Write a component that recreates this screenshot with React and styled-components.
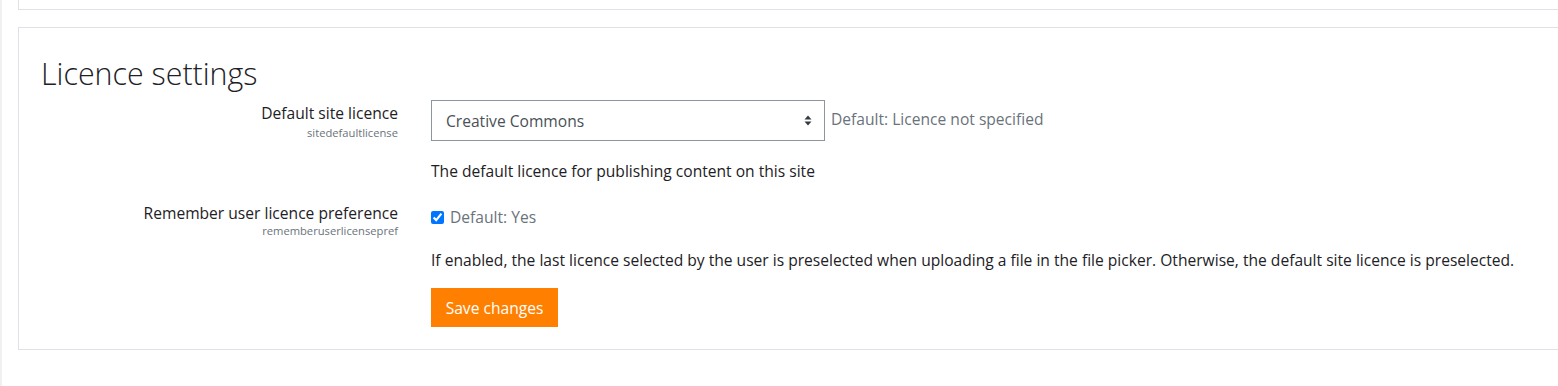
import React from 'react';
import styled, { createGlobalStyle } from 'styled-components';

const GlobalStyle = createGlobalStyle`
  html, body {
    margin: 0;
    padding: 0;
    background: #fff;
    overflow: hidden;
  }
  body {
    font-family: 'Open Sans', 'Noto Sans', sans-serif;
    font-size: 15.6px;
    color: #1d2125;
  }
`;

const Page = styled.div`
  display: flex;
  height: 386px;
  overflow: hidden;
`;

const Edge = styled.div`
  width: 2px;
  flex-shrink: 0;
  background: #f0f0f0;
`;

const Content = styled.div`
  flex: 1;
  padding-left: 16px;
  overflow: hidden;
`;

const TopPanel = styled.div`
  width: 1600px;
  height: 9px;
  border: 1px solid #dee2e6;
  border-top: none;
`;

const Panel = styled.fieldset`
  width: 1600px;
  margin: 17px 0 0;
  padding: 29px 20px 22px;
  border: 1px solid #dee2e6;
  box-sizing: border-box;
`;

const Heading = styled.h2`
  margin: 0 0 9px;
  padding-left: 2px;
  font-size: 30.4px;
  font-weight: 300;
  line-height: 34px;
  color: #1d2125;
`;

const Setting = styled.div`
  display: grid;
  grid-template-columns: 359px 1150px;
  column-gap: 33px;
  margin-top: ${(p) => p.$top || 0}px;
`;

const LabelCell = styled.div`
  display: flex;
  flex-direction: column;
  align-items: flex-end;
  padding-top: 2px;
`;

const Label = styled.label`
  line-height: 22px;
  color: #1d2125;
`;

const Key = styled.span`
  font-size: 11.2px;
  line-height: 14px;
  margin-top: ${(p) => p.$shift || 0}px;
  color: #6a737b;
`;

const ControlCell = styled.div`
  display: flex;
  flex-direction: column;
  align-items: flex-start;
  padding-top: ${(p) => p.$top || 0}px;
`;

const ControlLine = styled.div`
  display: flex;
  align-items: center;
  gap: 6px;
`;

const Select = styled.div`
  width: 394px;
  height: 41px;
  box-sizing: border-box;
  border: 1px solid #8f959e;
  display: flex;
  align-items: center;
  justify-content: space-between;
  padding: 0 12px 0 14px;
  color: #495057;
  background: #fff;
`;

const DefaultNote = styled.span`
  color: #6a737b;
  line-height: 22px;
  margin-top: ${(p) => p.$shift || 0}px;
`;

const Check = styled.input`
  width: 13px;
  height: 13px;
  margin: 0;
  accent-color: #0075ff;
`;

const Description = styled.div`
  margin-top: ${(p) => p.$top}px;
  line-height: 22px;
  color: #1d2125;
`;

const SaveButton = styled.button`
  margin-top: 17px;
  height: 39px;
  width: 127px;
  border: none;
  background: #ff7f00;
  color: #fff;
  font-family: inherit;
  font-size: 15.6px;
  padding: 0;
  cursor: pointer;
`;

const Arrows = () => (
  <svg width="8" height="11" viewBox="0 0 8 11">
    <path d="M4 0.5 L7.5 4.5 H0.5 Z M4 10.5 L0.5 6.5 H7.5 Z" fill="#343a40" />
  </svg>
);

export default function App() {
  return (
    <Page>
      <GlobalStyle />
      <Edge />
      <Content>
        <TopPanel />
        <Panel>
          <Heading>Licence settings</Heading>

          <Setting>
            <LabelCell>
              <Label>Default site licence</Label>
              <Key $shift={2}>sitedefaultlicense</Key>
            </LabelCell>
            <ControlCell>
              <ControlLine>
                <Select>
                  <span>Creative Commons</span>
                  <Arrows />
                </Select>
                <DefaultNote $shift={-3}>Default: Licence not specified</DefaultNote>
              </ControlLine>
              <Description $top={19}>
                The default licence for publishing content on this site
              </Description>
            </ControlCell>
          </Setting>

          <Setting $top={18}>
            <LabelCell>
              <Label>Remember user licence preference</Label>
              <Key>rememberuserlicensepref</Key>
            </LabelCell>
            <ControlCell $top={6}>
              <ControlLine>
                <Check type="checkbox" checked readOnly />
                <DefaultNote>Default: Yes</DefaultNote>
              </ControlLine>
              <Description $top={21}>
                If enabled, the last licence selected by the user is preselected when uploading a file in the file picker. Otherwise, the default site licence is preselected.
              </Description>
              <SaveButton>Save changes</SaveButton>
            </ControlCell>
          </Setting>
        </Panel>
      </Content>
    </Page>
  );
}
